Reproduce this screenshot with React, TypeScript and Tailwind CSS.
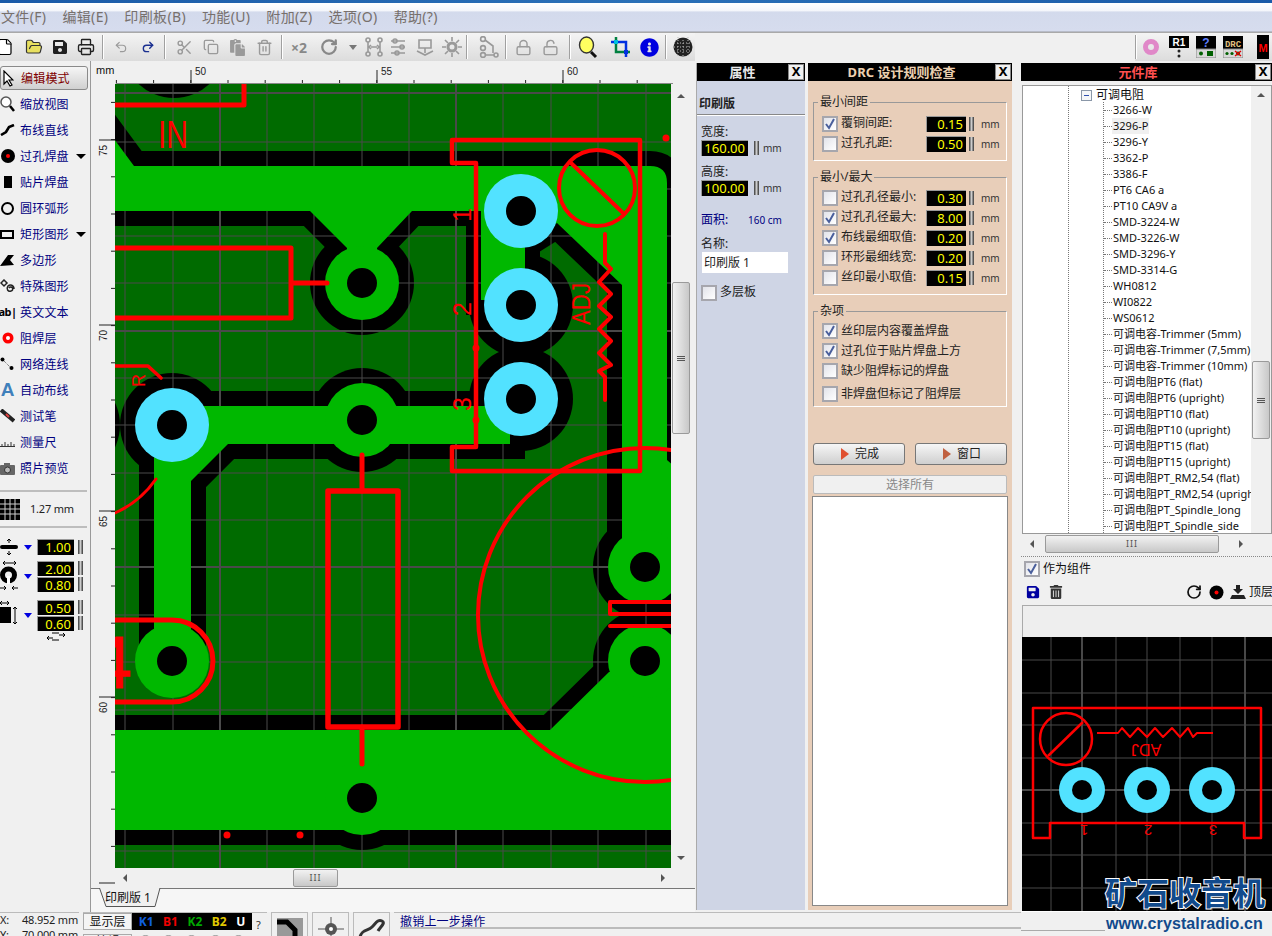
import type { ReactNode } from "react";
import {
  Copy,
  FileIcon,
  FolderOpen,
  Lock,
  Printer,
  Redo2,
  RotateCw,
  Scissors,
  Trash2,
  Undo2,
  Unlock,
} from "lucide-react";
import { FaSave, FaInfoCircle, FaTrashAlt, FaPaste } from "react-icons/fa";

const menus = ["文件(F)", "编辑(E)", "印刷板(B)", "功能(U)", "附加(Z)", "选项(O)", "帮助(?)"];

const gridX = [125, 173, 220, 267, 314, 362, 409, 456, 503, 551, 598, 646];
const gridY = [93, 142, 189, 236, 283, 331, 378, 425, 473, 520, 567, 615, 662, 710, 757, 804, 851];

const treeItems = [
  "3266-W", "3296-P", "3296-Y", "3362-P", "3386-F", "PT6 CA6 a", "PT10 CA9V a",
  "SMD-3224-W", "SMD-3226-W", "SMD-3296-Y", "SMD-3314-G", "WH0812", "WI0822", "WS0612",
  "可调电容-Trimmer (5mm)", "可调电容-Trimmer (7,5mm)", "可调电容-Trimmer (10mm)",
  "可调电阻PT6 (flat)", "可调电阻PT6 (upright)", "可调电阻PT10 (flat)", "可调电阻PT10 (upright)",
  "可调电阻PT15 (flat)", "可调电阻PT15 (upright)", "可调电阻PT_RM2,54 (flat)", "可调电阻PT_RM2,54 (uprigh",
  "可调电阻PT_Spindle_long", "可调电阻PT_Spindle_side",
];

function Sep() {
  return <div className="w-px h-[24px] bg-[#a0a0a0] border-r border-white shrink-0 box-content" />;
}

function Spin() {
  return <div className="w-[5px] h-[14px] shrink-0 bg-[linear-gradient(to_right,#333,#ccc,#333)]" />;
}

function Field({ value, className }: { value: string; className: string }) {
  return (
    <div className={`bg-black text-[#ffff00] text-[13px] leading-[14px] text-right pr-[3px] border-t border-l border-[#999] border-r-white border-b-white ${className}`}>
      {value}
    </div>
  );
}

function Check({ checked }: { checked?: boolean }) {
  return (
    <div className="w-[16px] h-[16px] shrink-0 border-2 border-[#a6a6ad] bg-[linear-gradient(135deg,#e2e3ea,#fff)] flex items-center justify-center">
      {checked && (
        <svg width="12" height="12" viewBox="0 0 12 12">
          <path d="M2 6l3 4 5-9" fill="none" stroke="#4a5f9c" strokeWidth="2" />
        </svg>
      )}
    </div>
  );
}

function CheckRow({ label, value, on, cls }: { label: string; value?: string; on?: boolean; cls: string }) {
  return (
    <div className={`flex items-center h-[16px] ${cls}`}>
      <Check checked={on} />
      <span className={`ml-[3px] w-[85px] whitespace-nowrap ${value ? "-translate-y-px" : ""}`}>{label}</span>
      {value && (
        <>
          <Field value={value} className="w-[40px] h-[16px]" />
          <div className="ml-[3px]"><Spin /></div>
          <span className="ml-[7px] text-[10px] text-[#333]">mm</span>
        </>
      )}
    </div>
  );
}

function PanelHead({ title, color }: { title: string; color: string }) {
  return (
    <div className="h-[18px] bg-black flex items-center shrink-0">
      <div className={`flex-1 text-center font-bold text-[13px] pt-px ${color}`}>{title}</div>
      <div className="w-[16px] h-[16px] mr-[1px] bg-[#f0f0f0] border border-[#888] text-black text-[13px] leading-[13px] text-center font-bold">X</div>
    </div>
  );
}

function Legend({ children }: { children: ReactNode }) {
  return (
    <div className="absolute -top-[8px] left-[4px] px-[2px] bg-[#e8ceb9] leading-[14px] text-[#222]">{children}</div>
  );
}

function Tool({ icon, label, arrow }: { icon: ReactNode; label: string; arrow?: boolean }) {
  return (
    <div className="h-[26px] flex items-center text-[#000080] text-[12px]">
      <div className="w-[15px] h-[16px] flex items-center justify-center shrink-0">{icon}</div>
      <span className="ml-[5px] whitespace-nowrap tracking-[0.2px] translate-y-px">{label}</span>
      {arrow && <div className="ml-[7px] w-0 h-0 border-l-[5px] border-r-[5px] border-t-[5px] border-l-transparent border-r-transparent border-t-black" />}
    </div>
  );
}

function BlueDrop() {
  return <div className="w-0 h-0 border-l-[4px] border-r-[4px] border-t-[5px] border-l-transparent border-r-transparent border-t-[#0000e0]" />;
}

function ScrollArrow({ dir }: { dir: "up" | "down" | "left" | "right" }) {
  if (dir === "up") return <div className="w-0 h-0 border-l-[4px] border-r-[4px] border-b-[4px] border-l-transparent border-r-transparent border-b-[#555]" />;
  if (dir === "down") return <div className="w-0 h-0 border-l-[4px] border-r-[4px] border-t-[4px] border-l-transparent border-r-transparent border-t-[#555]" />;
  if (dir === "left") return <div className="w-0 h-0 border-t-[4px] border-b-[4px] border-r-[4px] border-t-transparent border-b-transparent border-r-[#555]" />;
  return <div className="w-0 h-0 border-t-[4px] border-b-[4px] border-l-[4px] border-t-transparent border-b-transparent border-l-[#555]" />;
}

function HThumb({ className }: { className: string }) {
  return (
    <div className={`h-[18px] rounded-[2px] border border-[#9a9a9a] bg-[linear-gradient(to_bottom,#f2f2f2,#c8c8c8)] flex items-center justify-center text-[9px] text-[#555] ${className}`}>
      <span className="tracking-[1px]">III</span>
    </div>
  );
}

function VThumb({ className }: { className: string }) {
  return (
    <div className={`w-[18px] rounded-[2px] border border-[#9a9a9a] bg-[linear-gradient(to_right,#f2f2f2,#c8c8c8)] flex flex-col items-center justify-center gap-[1px] ${className}`}>
      <div className="w-[8px] h-px bg-[#555]" />
      <div className="w-[8px] h-px bg-[#555]" />
      <div className="w-[8px] h-px bg-[#555]" />
    </div>
  );
}

function Toolbar() {
  const gray = "#9a9a9a";
  return (
    <div className="h-[29px] flex shrink-0 border-t border-[#a9a9a9]">
      <div className="w-[695px] pl-[1px] flex items-center bg-[linear-gradient(to_bottom,#f4f4f4,#dcdcdc)] overflow-hidden">
        <div className="flex items-center gap-[9px] -ml-[5px]">
          <FileIcon size={18} fill="#fff" color="#000" strokeWidth={1.6} />
          <div className="ml-[2px]"><FolderOpen size={18} fill="#e8e060" color="#333" strokeWidth={1.6} /></div>
          <FaSave size={16} color="#202020" />
          <Printer size={18} color="#222" strokeWidth={1.8} />
        </div>
        <div className="ml-[7px]"><Sep /></div>
        <div className="ml-[10px] flex gap-[13px]">
          <Undo2 size={14} color={gray} />
          <Redo2 size={14} color="#1a2f90" strokeWidth={2.4} />
        </div>
        <div className="ml-[9px]"><Sep /></div>
        <div className="ml-[10px] flex items-center gap-[10px]">
          <Scissors size={17} color={gray} />
          <Copy size={16} color={gray} />
          <FaPaste size={17} color={gray} />
          <Trash2 size={17} color={gray} />
        </div>
        <div className="ml-[8px]"><Sep /></div>
        <span className="ml-[8px] font-bold text-[14px] text-[#888]">×2</span>
        <div className="ml-[13px]"><RotateCw size={18} color="#888" strokeWidth={3} /></div>
        <div className="ml-[11px] w-0 h-0 border-l-[4px] border-r-[4px] border-t-[5px] border-l-transparent border-r-transparent border-t-[#777]" />
        {/* pcb helper icons */}
        <svg className="ml-[7px]" width="100" height="22" viewBox="0 0 100 22" fill="none" stroke="#999" strokeWidth="1.6">
          <circle cx="4" cy="4" r="2" /><circle cx="4" cy="18" r="2" /><circle cx="16" cy="4" r="2" /><circle cx="16" cy="18" r="2" />
          <path d="M4 6v10M16 6v10M7 11h6M7 9l-2 2 2 2M13 9l2 2-2 2" />
          <path d="M27 5h14M27 11h14M27 17h14" /><circle cx="31" cy="5" r="2" /><circle cx="38" cy="11" r="2" /><circle cx="33" cy="17" r="2" />
          <path d="M55 4h12v8H55zM53 15l8 4 8-4M61 12v5" />
          <circle cx="88" cy="11" r="4" strokeWidth="3" /><path d="M88 1v4M88 17v4M78 11h4M94 11h4M81 4l3 3M95 4l-3 3M81 18l3-3M95 18l-3-3" />
        </svg>
        <div className="ml-[2px]"><Sep /></div>
        <svg className="ml-[11px]" width="20" height="22" viewBox="0 0 20 22" fill="none" stroke="#999" strokeWidth="1.6">
          <circle cx="4" cy="3" r="2.4" /><circle cx="4" cy="12" r="2.4" /><circle cx="4" cy="19" r="2.4" /><circle cx="17" cy="19" r="2" />
          <path d="M6 4l8 6v7M6 19h9" />
        </svg>
        <div className="ml-[6px]"><Sep /></div>
        <div className="ml-[8px] flex gap-[10px]">
          <Lock size={17} color={gray} strokeWidth={2} />
          <Unlock size={17} color={gray} strokeWidth={2} />
        </div>
        <div className="ml-[10px]"><Sep /></div>
        <svg className="ml-[7px]" width="20" height="24" viewBox="0 0 20 24">
          <ellipse cx="8.5" cy="10" rx="7" ry="8" fill="#ffff60" stroke="#333" strokeWidth="1.4" />
          <path d="M13 17l5 5" stroke="#111" strokeWidth="3" />
        </svg>
        <svg className="ml-[12px]" width="22" height="24" viewBox="0 0 22 24" fill="none">
          <path d="M6 2v15h14" stroke="#008040" strokeWidth="2.5" />
          <path d="M1 7h15v15" stroke="#0030e0" strokeWidth="2.5" />
          <rect x="4" y="5" width="4" height="4" fill="#00c0e0" /><rect x="14" y="15" width="4" height="4" fill="#0030e0" />
        </svg>
        <div className="ml-[8px]"><FaInfoCircle size={19} color="#0000e0" /></div>
        <div className="ml-[6px]"><Sep /></div>
        <svg className="ml-[6px]" width="20" height="22" viewBox="0 0 20 22">
          <circle cx="10" cy="11" r="9.5" fill="#222" />
          <path d="M1 7h18M1 11h18M1 15h18M5 1v20M10 1v20M15 1v20" stroke="#bbb" strokeWidth="1" strokeDasharray="1 2" />
        </svg>
      </div>
      <div className="flex-1 bg-[#f0f0f0]" />
      <div className="w-[137px] flex items-center bg-[linear-gradient(to_bottom,#f4f4f4,#dcdcdc)]">
        <Sep />
        <svg className="ml-[6px]" width="16" height="16" viewBox="0 0 16 16">
          <circle cx="8" cy="8" r="5.5" fill="none" stroke="#e088c8" strokeWidth="5" />
        </svg>
        <svg className="ml-[10px]" width="20" height="22" viewBox="0 0 20 22">
          <rect width="20" height="12" fill="#000" />
          <text x="10" y="10" textAnchor="middle" fill="#fff" fontSize="10" fontWeight="700" className="font-['Liberation_Sans']">R1</text>
          <circle cx="10" cy="15" r="1.5" fill="#222" /><circle cx="10" cy="20" r="1.5" fill="#222" />
        </svg>
        <svg className="ml-[7px]" width="20" height="22" viewBox="0 0 20 22">
          <rect width="20" height="13" fill="#000" />
          <rect y="13" width="20" height="9" fill="#d8d8d8" stroke="#888" />
          <text x="10" y="11" textAnchor="middle" fill="#6080ff" fontSize="12" fontWeight="700" className="font-['Liberation_Sans']">?</text>
          <circle cx="5" cy="17.5" r="2" fill="#006000" /><rect x="11" y="15" width="6" height="5" fill="#006000" />
        </svg>
        <svg className="ml-[7px]" width="20" height="22" viewBox="0 0 20 22">
          <rect width="20" height="13" fill="#000" />
          <rect y="13" width="20" height="9" fill="#d8d8d8" stroke="#888" />
          <text x="10" y="11" textAnchor="middle" fill="#e0c080" fontSize="9" fontWeight="700" className="font-['Liberation_Mono']">DRC</text>
          <circle cx="4" cy="17.5" r="1.6" fill="#006000" /><circle cx="9" cy="17.5" r="1.6" fill="#006000" /><circle cx="15" cy="17.5" r="2" fill="#006000" />
          <path d="M12 15l6 5M18 15l-6 5" stroke="#e00000" strokeWidth="1.4" />
        </svg>
        <svg className="ml-[13px]" width="14" height="24" viewBox="0 0 14 24">
          <rect x="1" width="12" height="24" fill="#000" />
          <text x="7" y="17" textAnchor="middle" fill="#ff0000" fontSize="11" fontWeight="700" className="font-['Liberation_Sans']">M</text>
        </svg>
      </div>
    </div>
  );
}

function LeftRail() {
  return (
    <div className="w-[90px] shrink-0 pt-[5px] bg-[#f0f0f0]">
      <div className="h-[24px] w-[88px] mb-[1px] rounded-[3px] border border-[#8a8a8a] bg-[linear-gradient(to_bottom,#f6f6f6,#d0d0d0)] flex items-center text-[12px] text-[#800000]">
        <div className="w-[15px] flex justify-center">
          <svg width="11" height="17" viewBox="0 0 11 17"><path d="M1 1v13l3-3 3 5 2-1-3-5h4z" fill="#fff" stroke="#000" strokeWidth="1.2" /></svg>
        </div>
        <span className="ml-[5px] tracking-[0.2px] translate-y-px">编辑模式</span>
      </div>
      <Tool label="缩放视图" icon={<svg width="15" height="16" viewBox="0 0 15 16"><circle cx="6" cy="6" r="5" fill="#fff" stroke="#555" strokeWidth="1.5" /><path d="M10 10l4 5" stroke="#000" strokeWidth="2.5" /></svg>} />
      <Tool label="布线直线" icon={<svg width="15" height="12" viewBox="0 0 15 12"><path d="M1 11l5-3 3-5 5-2" fill="none" stroke="#000" strokeWidth="2.6" /></svg>} />
      <Tool label="过孔焊盘" arrow icon={<svg width="14" height="14" viewBox="0 0 14 14"><circle cx="7" cy="7" r="7" fill="#000" /><circle cx="7" cy="7" r="2" fill="#f00" /></svg>} />
      <Tool label="贴片焊盘" icon={<div className="w-[8px] h-[12px] bg-black" />} />
      <Tool label="圆环弧形" icon={<div className="w-[13px] h-[13px] rounded-full border-2 border-black" />} />
      <Tool label="矩形图形" arrow icon={<div className="w-[14px] h-[9px] -ml-[2px] border-2 border-black" />} />
      <Tool label="多边形" icon={<svg width="15" height="12" viewBox="0 0 15 12"><path d="M0 12L8 1h6l-4 5 4 5z" /></svg>} />
      <Tool label="特殊图形" icon={<svg width="15" height="15" viewBox="0 0 15 15" fill="none" stroke="#222" strokeWidth="1.5"><path d="M4 1l3 3-3 3-3-3z" /><path d="M9 9a2 2 0 1 1 2 3c-3 1-5-2-3-5 2-2 6-1 6 3" /></svg>} />
      <Tool label="英文文本" icon={<span className="font-bold text-[11px] text-black tracking-[-0.6px] whitespace-nowrap">ab|</span>} />
      <Tool label="阻焊层" icon={<svg width="12" height="12" viewBox="0 0 12 12"><circle cx="6" cy="6" r="5.5" fill="#f00" /><circle cx="6" cy="6" r="2" fill="#fff" /></svg>} />
      <Tool label="网络连线" icon={<svg width="15" height="14" viewBox="0 0 15 14"><circle cx="2.5" cy="2.5" r="2" /><circle cx="11.5" cy="11" r="2" /><path d="M4 4l6 6" stroke="#555" strokeDasharray="1 1" /></svg>} />
      <Tool label="自动布线" icon={<span className="font-bold text-[19px] leading-[16px] text-[#3f80bb] font-['Liberation_Sans']">A</span>} />
      <Tool label="测试笔" icon={<svg width="15" height="14" viewBox="0 0 15 14"><path d="M1 1l13 11" stroke="#222" strokeWidth="4" /><path d="M6 5l3 3" stroke="#e04040" strokeWidth="2" /></svg>} />
      <Tool label="测量尺" icon={<svg width="15" height="10" viewBox="0 0 15 10"><path d="M0 9.5h15M2 9V7M5 9V5M8 9V7M11 9V5M14 9V7" stroke="#333" fill="none" /></svg>} />
      <Tool label="照片预览" icon={<svg width="15" height="13" viewBox="0 0 15 13"><rect y="3" width="15" height="10" rx="1" fill="#666" /><rect x="4" y="1" width="6" height="3" fill="#666" /><circle cx="7.5" cy="8" r="3" fill="#bbb" stroke="#333" /></svg>} />

      <div className="mt-[9px] w-[87px] border-t-2 border-[#bdbdbd]" />
      <div className="h-[34px] flex items-center">
        <svg width="20" height="21" viewBox="0 0 20 21" className="shrink-0">
          <rect width="20" height="21" fill="#000" />
          <path d="M5 0v21M10 0v21M15 0v21M0 5h20M0 10h20M0 15h20" stroke="#ccc" />
        </svg>
        <span className="ml-[10px] text-[11px] tracking-[-0.2px] text-[#222] whitespace-nowrap">1.27 mm</span>
      </div>
      <div className="w-[87px] border-t-2 border-[#bdbdbd]" />

      <div className="mt-[11px] h-[16px] flex items-center">
        <svg width="19" height="16" viewBox="0 0 19 16" className="shrink-0"><rect x="0" y="6" width="18" height="4" rx="2" /><path d="M9 0v4M7 2l2-2 2 2M9 16v-4M7 14l2 2 2-2" stroke="#000" fill="none" /></svg>
        <div className="ml-[5px]"><BlueDrop /></div>
        <Field value="1.00" className="ml-[5px] w-[37px] h-[16px]" />
        <div className="ml-[4px]"><Spin /></div>
      </div>
      <div className="mt-[5px] flex items-center">
        <svg width="19" height="32" viewBox="0 0 19 32" className="shrink-0">
          <path d="M3 3h13M3 3l2-2M3 3l2 2M16 3l-2-2M16 3l-2 2" stroke="#000" fill="none" />
          <circle cx="8.5" cy="15" r="6" fill="none" stroke="#000" strokeWidth="5" />
          <rect x="7" y="16" width="3" height="8" fill="#fff" />
          <path d="M0 28h6M6 28l-2-2M6 28l-2 2M18 28h-6M12 28l2-2M12 28l2 2" stroke="#000" fill="none" />
        </svg>
        <div className="ml-[5px]"><BlueDrop /></div>
        <div className="ml-[5px] flex flex-col gap-px">
          <div className="flex items-center"><Field value="2.00" className="w-[37px] h-[15px]" /><div className="ml-[4px]"><Spin /></div></div>
          <div className="flex items-center"><Field value="0.80" className="w-[37px] h-[15px]" /><div className="ml-[4px]"><Spin /></div></div>
        </div>
      </div>
      <div className="mt-[7px] flex items-center">
        <svg width="19" height="32" viewBox="0 0 19 32" className="shrink-0">
          <path d="M0 4h9M0 4l2-2M0 4l2 2M9 4l-2-2M9 4l-2 2" stroke="#000" fill="none" />
          <rect y="8" width="11" height="16" fill="#000" />
          <path d="M15 8v17M15 8l-2 2M15 8l2 2M15 25l-2-2M15 25l2-2" stroke="#000" fill="none" />
        </svg>
        <div className="ml-[5px]"><BlueDrop /></div>
        <div className="ml-[5px] flex flex-col gap-px">
          <div className="flex items-center"><Field value="0.50" className="w-[37px] h-[15px]" /><div className="ml-[4px]"><Spin /></div></div>
          <div className="flex items-center"><Field value="0.60" className="w-[37px] h-[15px]" /><div className="ml-[4px]"><Spin /></div></div>
        </div>
      </div>
      <div className="ml-[46px] mt-[1px]">
        <svg width="20" height="9" viewBox="0 0 20 9" fill="none" stroke="#000"><path d="M1 6h6M1 6l2-2M1 6l2 2M19 3h-6M19 3l-2-2M19 3l-2 2M6 1h7M6 8h7" /></svg>
      </div>
    </div>
  );
}

function RulerTop() {
  const minors = Array.from({ length: 15 }, (_, i) => 115.4 + i * 37.2);
  return (
    <svg width="605" height="23" viewBox="90 61 605 23" className="block shrink-0">
      <text x="95" y="74" fontSize="11" fill="#111" className="font-['Liberation_Sans']">mm</text>
      {minors.map((x) => <path key={x} d={`M${x} 80v4`} stroke="#222" />)}
      {[190, 376, 562].map((x, i) => (
        <g key={x}>
          <path d={`M${x} 70v14`} stroke="#222" />
          <text x={x + 4} y="75" fontSize="10" fill="#222" className="font-['Liberation_Sans']">{50 + i * 5}</text>
        </g>
      ))}
      <path d="M115 83.5H672" stroke="#888" />
    </svg>
  );
}

function RulerLeft() {
  const minors = Array.from({ length: 21 }, (_, i) => 102.4 + i * 37.2);
  return (
    <svg width="25" height="804" viewBox="90 84 25 804" className="block shrink-0">
      {minors.map((y) => <path key={y} d={`M111 ${y}h4`} stroke="#222" />)}
      {[140, 325, 511, 697, 883].map((y, i) => (
        <g key={y}>
          <path d={`M99 ${y}h16`} stroke="#222" />
          <text transform={`rotate(-90 107 ${y + 16})`} x="107" y={y + 16} fontSize="10" fill="#222" className="font-['Liberation_Sans']">{75 - i * 5}</text>
        </g>
      ))}
    </svg>
  );
}

function Board() {
  const dark = "#006b00";
  const copper = "#00b800";
  const silk = "#ff0000";
  const cyan = "#52e2ff";
  const grid = "#4a4a4a";
  const topPour = "M95 113L134 166H650Q667 166 667 183V460L690 480V560H622V285L557 223L530 240H525V300H481V211H412L377 248V283H347V248L310 211H95Z";
  const track = "M154 450V632H191V481L228 444H510V406H172Z";
  const lowerPour = "M95 730H550L609 672H690V830H95Z";
  const clearPads: [number, number][] = [[174, 46], [362, 283], [68, 425], [172, 425], [362, 420], [521, 305], [521, 399], [645, 567], [645, 661], [362, 798]];
  const greenPads: [number, number][] = [[362, 283], [362, 420], [172, 661], [645, 567], [645, 661], [362, 798]];
  const cyanPads: [number, number][] = [[172, 425], [521, 211], [521, 305], [521, 399]];
  return (
    <svg width="556" height="784" viewBox="115 84 556 784" className="block">
      <rect x="115" y="84" width="556" height="784" fill={dark} />
      <g fill="#000" stroke="#000">
        <path d={topPour} strokeWidth="30" />
        <path d={track} strokeWidth="30" />
        <path d={lowerPour} strokeWidth="30" />
        {clearPads.map(([x, y]) => <circle key={`${x}-${y}`} cx={x} cy={y} r="52" stroke="none" />)}
      </g>
      {gridX.map((x) => <path key={x} d={`M${x} 84V868`} stroke={grid} strokeWidth={x === 220 || x === 456 ? 2 : 1} />)}
      {gridY.map((y) => <path key={y} d={`M115 ${y}H671`} stroke={grid} strokeWidth={y === 93 || y === 331 || y === 567 || y === 804 ? 2 : 1} />)}
      <g fill={copper}>
        <path d={topPour} />
        <path d={track} />
        <path d={lowerPour} />
        {greenPads.map(([x, y]) => <circle key={`${x}-${y}`} cx={x} cy={y} r="37" />)}
      </g>
      {greenPads.map(([x, y]) => <circle key={`h${x}-${y}`} cx={x} cy={y} r="15" fill="#000" />)}
      {cyanPads.map(([x, y]) => (
        <g key={`c${x}-${y}`}>
          <circle cx={x} cy={y} r="37" fill={cyan} />
          <circle cx={x} cy={y} r="15" fill="#000" />
        </g>
      ))}
      <g fill="none" stroke={silk} strokeLinecap="round" strokeLinejoin="round">
        <path d="M110 105H244V84" strokeWidth="5" />
        <path d="M110 248H291V318H110M292 283H327" strokeWidth="5" />
        <path d="M110 366H148L161 378" strokeWidth="3.5" />
        <path d="M115 513Q140 502 156 479" strokeWidth="3" />
        <path d="M110 620H172A41 41 0 0 1 172 702H110" strokeWidth="5" />
        <path d="M362 455V491M362 727V764" strokeWidth="5" />
        <rect x="328" y="491" width="70" height="236" strokeWidth="5.5" />
        <circle cx="645" cy="615" r="167" strokeWidth="4" />
        <path d="M452 140H640V471H452V447H476V163H452Z" strokeWidth="4.5" />
        <circle cx="597" cy="188" r="38" strokeWidth="4" />
        <path d="M571 163L622 212" strokeWidth="4" />
        <path d="M605 234V263L611 269L599 282L611 294L599 306L611 317L599 329L611 341L599 353L611 365L599 371L605 377V400" strokeWidth="4" />
        <path d="M672 602H610V614H672M610 626H672" strokeWidth="4" />
      </g>
      <g fill={silk} className="font-['Liberation_Sans']">
        <text x="158" y="148" fontSize="38" textLength="30" lengthAdjust="spacingAndGlyphs">IN</text>
        <text transform="rotate(-90 590 325)" x="590" y="325" fontSize="25" textLength="42" lengthAdjust="spacingAndGlyphs">ADJ</text>
        <text transform="rotate(-90 471 222)" x="471" y="222" fontSize="25">1</text>
        <text transform="rotate(-90 471 316)" x="471" y="316" fontSize="25">2</text>
        <text transform="rotate(-90 471 411)" x="471" y="411" fontSize="25">3</text>
        <text transform="rotate(-90 145 387)" x="145" y="387" fontSize="18">R</text>
        <text x="91" y="688" fontSize="74" stroke={silk} strokeWidth="1">4</text>
      </g>
      <g fill={silk}>
        <circle cx="227" cy="835" r="3.5" /><circle cx="300" cy="835" r="3.5" /><circle cx="666" cy="138" r="3.5" />
        <circle cx="476" cy="348" r="3.5" /><circle cx="476" cy="420" r="3.5" />
      </g>
    </svg>
  );
}

function BoardColumn() {
  return (
    <div className="w-[605px] shrink-0 flex flex-col border-l border-[#999] box-border">
      <RulerTop />
      <div className="flex h-[804px]">
        <div className="-ml-px"><RulerLeft /></div>
        <div className="w-[556px] shrink-0 flex flex-col">
          <Board />
          <div className="h-[20px] flex items-center bg-[#f0f0f0] relative">
            <div className="ml-[8px]"><ScrollArrow dir="left" /></div>
            <div className="ml-[166px]"><HThumb className="w-[45px]" /></div>
            <div className="ml-auto mr-[6px]"><ScrollArrow dir="right" /></div>
          </div>
        </div>
        <div className="w-[20px] h-[784px] shrink-0 flex flex-col items-center bg-[#f0f0f0]">
          <div className="mt-[10px]"><ScrollArrow dir="up" /></div>
          <VThumb className="mt-[184px] h-[152px]" />
          <div className="mt-auto mb-[8px]"><ScrollArrow dir="down" /></div>
        </div>
      </div>
      <div className="h-[24px] border-t border-[#777] bg-[#f6f6f6]">
        <div className="relative ml-[8px] w-[64px] h-[20px] -mt-px">
          {/* slanted sheet tab */}
          <svg width="64" height="20" viewBox="0 0 64 20" className="absolute left-0 top-0">
            <path d="M0.5 0L7 18.5H56L61 0" fill="#f0f0f0" stroke="#555" />
          </svg>
          <span className="absolute left-[6px] top-[1px] whitespace-nowrap text-[12px] leading-[17px] text-[#111]">印刷版 1</span>
        </div>
      </div>
    </div>
  );
}

function PropsPanel() {
  return (
    <div className="w-[109px] ml-[1px] mt-[2px] h-[847px] shrink-0 flex flex-col bg-[#cfd5e5] border-l border-[#aaa]">
      <PanelHead title="属性" color="text-[#e8e8e8]" />
      <div className="flex-1 text-[12px] text-[#222]">
        <div className="mt-[13px] pl-[2px] pt-px h-[18px] font-bold leading-[18px]">印刷版</div>
        <div className="mt-[2px] border-t border-[#888] border-b border-b-white h-[2px]" />
        <div className="ml-[4px] mt-[6px] pt-px h-[18px] leading-[18px]">宽度:</div>
        <div className="ml-[4px] flex items-center">
          <Field value="160.00" className="w-[47px] h-[16px]" />
          <div className="ml-[6px]"><Spin /></div>
          <span className="ml-[4px] text-[10px] text-[#333]">mm</span>
        </div>
        <div className="ml-[4px] mt-[6px] pt-px h-[18px] leading-[18px]">高度:</div>
        <div className="ml-[4px] flex items-center">
          <Field value="100.00" className="w-[47px] h-[16px]" />
          <div className="ml-[6px]"><Spin /></div>
          <span className="ml-[4px] text-[10px] text-[#333]">mm</span>
        </div>
        <div className="ml-[4px] mt-[14px] pt-[2px] flex items-center h-[18px] text-[#000080]">
          <span className="w-[47px]">面积:</span>
          <span className="text-[10px]">160 cm</span>
        </div>
        <div className="ml-[4px] mt-[6px] pt-px h-[18px] leading-[18px]">名称:</div>
        <div className="ml-[5px] mt-0 w-[86px] h-[21px] bg-white leading-[21px] pl-[2px]">印刷版 1</div>
        <div className="ml-[4px] mt-[11px] flex items-center">
          <Check />
          <span className="ml-[3px] -translate-y-px">多层板</span>
        </div>
      </div>
    </div>
  );
}

function DrcPanel() {
  return (
    <div className="w-[204px] ml-[3px] mt-[2px] h-[847px] shrink-0 flex flex-col bg-[#e8ceb9]">
      <PanelHead title="DRC 设计规则检查" color="text-[#ecd0b0]" />
      <div className="flex-1 flex flex-col text-[12px] text-[#222] px-[5px]">
        <div className="relative mt-[21px] h-[59px] border border-[#999] border-r-white border-b-white">
          <Legend>最小间距</Legend>
          <CheckRow cls="mt-[13px] ml-[8px]" on label="覆铜间距:" value="0.15" />
          <CheckRow cls="mt-[4px] ml-[8px]" label="过孔孔距:" value="0.50" />
        </div>
        <div className="relative mt-[16px] h-[118px] border border-[#999] border-r-white border-b-white">
          <Legend>最小/最大</Legend>
          <CheckRow cls="mt-[12px] ml-[8px]" label="过孔孔径最小:" value="0.30" />
          <CheckRow cls="mt-[4px] ml-[8px]" on label="过孔孔径最大:" value="8.00" />
          <CheckRow cls="mt-[4px] ml-[8px]" on label="布线最细取值:" value="0.20" />
          <CheckRow cls="mt-[4px] ml-[8px]" label="环形最细线宽:" value="0.20" />
          <CheckRow cls="mt-[4px] ml-[8px]" label="丝印最小取值:" value="0.15" />
        </div>
        <div className="relative mt-[16px] h-[96px] border border-[#999] border-r-white border-b-white">
          <Legend>杂项</Legend>
          <CheckRow cls="mt-[11px] ml-[8px]" on label="丝印层内容覆盖焊盘" />
          <CheckRow cls="mt-[4px] ml-[8px]" on label="过孔位于贴片焊盘上方" />
          <CheckRow cls="mt-[4px] ml-[8px]" label="缺少阻焊标记的焊盘" />
          <CheckRow cls="mt-[7px] ml-[8px]" label="非焊盘但标记了阻焊层" />
        </div>
        <div className="mt-[36px] flex justify-between">
          {["完成", "窗口"].map((t, i) => (
            <div key={t} className="w-[92px] h-[22px] pl-[2px] rounded-[3px] border border-[#777] bg-[linear-gradient(to_bottom,#f6f6f6,#cfcfcf)] flex items-center justify-center">
              <div className={`w-0 h-0 border-t-[6px] border-b-[6px] border-l-[8px] border-t-transparent border-b-transparent ${i === 0 ? "border-l-[#e05030]" : "border-l-[#c06040]"}`} />
              <span className="ml-[6px] text-[#222]">{t}</span>
            </div>
          ))}
        </div>
        <div className="mt-[10px] h-[19px] rounded-[2px] border border-[#bbb] bg-[#f0f0f0] text-center text-[#888] leading-[17px]">选择所有</div>
        <div className="mt-[2px] h-[410px] -mx-px bg-white border border-[#888]" />
      </div>
    </div>
  );
}

function LibraryPanel() {
  return (
    <div className="w-[251px] ml-[9px] mt-[2px] shrink-0 flex flex-col bg-[#f0f0f0] relative">
      <PanelHead title="元件库" color="text-[#ff5050]" />
      <div className="ml-px mt-[4px] h-[450px] border border-[#999] bg-white flex overflow-hidden">
        <div className="flex-1 relative overflow-hidden text-[11px] text-[#111]">
          {/* tree guide lines lie over the rows */}
          <div className="absolute left-[45px] top-0 bottom-0 border-l border-dotted border-[#777]" />
          <div className="absolute left-[80px] top-[16px] bottom-0 border-l border-dotted border-[#777]" />
          <div className="h-[16px] flex items-center text-[12px] pl-[58px] translate-y-px">
            <div className="w-[11px] h-[11px] border border-[#8a97a8] bg-[#f4f6f8] flex items-center justify-center shrink-0">
              <div className="w-[5px] h-px bg-[#3050b0]" />
            </div>
            <span className="ml-[4px]">可调电阻</span>
          </div>
          {treeItems.map((name) => (
            <div key={name} className="h-[16px] flex items-center pl-[81px]">
              <div className="w-[8px] border-t border-dotted border-[#777] shrink-0" />
              <span className={`whitespace-nowrap px-[1px] ${name === "3296-P" ? "bg-[#f0f0f0]" : ""}`}>{name}</span>
            </div>
          ))}
        </div>
        <div className="w-[20px] shrink-0 bg-[#f0f0f0] flex flex-col items-center">
          <div className="mt-[7px]"><ScrollArrow dir="up" /></div>
          <VThumb className="mt-[264px] h-[78px]" />
        </div>
      </div>
      <div className="ml-px h-[20px] bg-[#f0f0f0] flex items-center relative">
        <div className="ml-[8px]"><ScrollArrow dir="left" /></div>
        <div className="ml-[11px]"><HThumb className="w-[174px]" /></div>
        <div className="ml-[20px]"><ScrollArrow dir="right" /></div>
      </div>
      <div className="border-t border-dotted border-[#888] mt-[2px]" />
      <div className="ml-[3px] mt-[3px] flex items-center text-[12px] text-[#111] h-[17px]">
        <Check checked />
        <span className="ml-[3px]">作为组件</span>
      </div>
      <div className="h-[24px] mt-[3px] flex items-center text-[12px] text-[#111]">
        <div className="ml-[5px]"><FaSave size={14} color="#0000a0" /></div>
        <div className="ml-[9px]"><FaTrashAlt size={14} color="#333" /></div>
        <div className="ml-auto flex items-center whitespace-nowrap">
          <RotateCw size={16} strokeWidth={2.6} color="#111" />
          <svg className="ml-[7px]" width="15" height="15" viewBox="0 0 15 15"><circle cx="7.5" cy="7.5" r="7" fill="#000" /><circle cx="7.5" cy="7.5" r="2" fill="#f00" /></svg>
          <svg className="ml-[6px]" width="16" height="15" viewBox="0 0 16 15"><path d="M6 0h4v4h3l-5 5-5-5h3zM2 10h12l2 4H0z" fill="#222" /></svg>
          <span className="ml-[3px] -mr-[1px]">顶层</span>
        </div>
      </div>
      <div className="h-[32px] mt-[1px] ml-px border-t border-l border-[#aaa] bg-[#eee]" />
      <Preview />
      <div className="flex-1 bg-[#f0f0f0] border-t border-white relative">
        <div className="absolute left-[85px] top-[2px] font-bold text-[16px] tracking-[0.1px] leading-[20px] text-[#114a8c] whitespace-nowrap font-['Liberation_Sans']">www.crystalradio.cn</div>
        <div className="absolute left-0 top-[18px] w-[84px] border-t border-[#aaa]" />
      </div>
      <div className="absolute left-[84px] top-[813px] text-[32px] font-bold leading-[34px] whitespace-nowrap text-[#114a8c] [-webkit-text-stroke:2px_white] [paint-order:stroke_fill]">矿石收音机</div>
    </div>
  );
}

function Preview() {
  const xs = [1051, 1082, 1116, 1147, 1180, 1212, 1245];
  const ys = [660, 693, 725, 758, 790, 823, 855, 888];
  return (
    <svg width="250" height="274" viewBox="1022 637 250 274" className="block ml-px shrink-0">
      <rect x="1022" y="637" width="250" height="274" fill="#000" />
      {xs.map((x) => <path key={x} d={`M${x} 637V911`} stroke="#484848" strokeWidth={x === 1082 || x === 1245 ? 2 : 1} />)}
      {ys.map((y) => <path key={y} d={`M1022 ${y}H1272`} stroke="#484848" strokeWidth={y === 790 ? 2 : 1} />)}
      <g fill="none" stroke="#f00" strokeWidth="2.5" strokeLinejoin="round">
        <path d="M1033 708H1261V838H1244V823H1050V838H1033Z" />
        <circle cx="1066" cy="739" r="26" />
        <path d="M1048 756L1083 722" />
        <path d="M1097 733H1118L1122 728L1130 737L1138 728L1147 737L1155 728L1163 737L1172 728L1180 737L1188 728L1193 737L1197 733H1213" strokeWidth="2" />
      </g>
      {[1082, 1147, 1212].map((x) => (
        <g key={x}>
          <circle cx={x} cy="790" r="23" fill="#52e2ff" />
          <circle cx={x} cy="790" r="10" fill="#000" />
        </g>
      ))}
      <g fill="#f00" className="font-['Liberation_Sans']">
        <text transform="rotate(180 1146 749)" x="1146" y="754" textAnchor="middle" fontSize="16">ADJ</text>
        <text transform="rotate(180 1084 830)" x="1084" y="835" textAnchor="middle" fontSize="15">1</text>
        <text transform="rotate(180 1148 830)" x="1148" y="835" textAnchor="middle" fontSize="15">2</text>
        <text transform="rotate(180 1213 830)" x="1213" y="835" textAnchor="middle" fontSize="15">3</text>
      </g>
    </svg>
  );
}

function StatusBar() {
  const layers = [
    ["K1", "text-[#1060e0]"],
    ["B1", "text-[#f00000]"],
    ["K2", "text-[#00a800]"],
    ["B2", "text-[#e0c800]"],
    ["U", "text-white"],
  ];
  return (
    <div className="h-[24px] w-[1021px] flex items-start text-[12px] overflow-hidden bg-[#f0f0f0]">
      <div className="w-[79px] h-[24px] border-t border-[#bbb] text-[11px] tracking-[-0.2px] text-[#222] whitespace-nowrap">
        <div className="flex h-[15px] items-center"><span className="w-[22px]">X:</span>48.952 mm</div>
        <div className="flex h-[15px] items-center"><span className="w-[22px]">Y:</span>70.000 mm</div>
      </div>
      <div className="ml-[4px] w-[184px] h-[24px] border-t border-[#bbb]">
        <div className="flex">
          <div className="w-[49px] h-[17px] border border-[#aaa] bg-[#f4f4f4] text-center leading-[15px] text-[#111]">显示层</div>
          <div className="w-[120px] h-[17px] bg-black flex items-center justify-around font-bold text-[12px] px-[2px]">
            {layers.map(([n, c]) => <span key={n} className={c}>{n}</span>)}
          </div>
          <span className="ml-[4px] mt-[4px] text-[#333] text-[11px]">?</span>
        </div>
        <div className="flex">
          <div className="w-[49px] h-[17px] border border-[#aaa] text-center leading-[14px] text-[#111]">编辑</div>
          <div className="w-[120px] flex justify-around px-[2px] pt-[1px]">
            {layers.map(([n]) => <div key={n} className="w-[13px] h-[13px] rounded-full border border-[#999]" />)}
          </div>
        </div>
      </div>
      <div className="ml-[4px] w-[37px] h-[24px] border border-b-0 border-[#bbb] flex justify-center pt-[5px]">
        <svg width="26" height="19" viewBox="0 0 26 19"><rect width="26" height="19" fill="#999" /><path d="M0 4h10l8 8v7" fill="none" stroke="#000" strokeWidth="5" /></svg>
      </div>
      <div className="ml-[4px] w-[37px] h-[24px] border border-b-0 border-[#bbb] flex justify-center pt-[4px]">
        <svg width="26" height="20" viewBox="0 0 26 20"><path d="M13 0v20M0 12h26" stroke="#555" /><circle cx="13" cy="12" r="6" fill="#555" /><circle cx="13" cy="12" r="2" fill="#fff" /></svg>
      </div>
      <div className="ml-[4px] w-[37px] h-[24px] border border-b-0 border-[#bbb] flex justify-center pt-[4px]">
        <svg width="28" height="20" viewBox="0 0 28 20"><path d="M2 20c2-8 8-6 12-10s6-8 10-6-2 6-4 10" fill="none" stroke="#333" strokeWidth="3" /></svg>
      </div>
      <div className="ml-[4px] flex-1 h-[24px] border-t border-[#bbb] pl-[6px]">
        <div className="h-[16px] leading-[17px] text-[#000080] tracking-[0.2px] border-b-2 border-[#bbb]">撤销上一步操作</div>
      </div>
    </div>
  );
}

export default function App() {
  return (
    <div className="w-[1272px] h-[936px] overflow-hidden bg-[#f0f0f0] flex flex-col relative font-['Noto_Sans','Noto_Sans_CJK_SC',sans-serif] text-[12px]">
      <div className="h-[3px] shrink-0 bg-[linear-gradient(to_right,#1a5aa8,#2a70b8,#1a5aa8)]" />
      <div className="h-[29px] shrink-0 flex items-end pb-[5px] pl-[1px] gap-[16px] text-[14px] tracking-[0.35px] leading-[18px] text-[#77706c] bg-[linear-gradient(to_bottom,#ffffff_0%,#f4f6fb_28%,#d3daec_32%,#d6dcee_100%)] border-b border-[#b8bcc8]">
        {menus.map((m) => <span key={m} className="whitespace-nowrap">{m}</span>)}
      </div>
      <Toolbar />
      <div className="flex h-[851px] shrink-0">
        <LeftRail />
        <BoardColumn />
        <PropsPanel />
        <DrcPanel />
        <LibraryPanel />
      </div>
      <StatusBar />
    </div>
  );
}
